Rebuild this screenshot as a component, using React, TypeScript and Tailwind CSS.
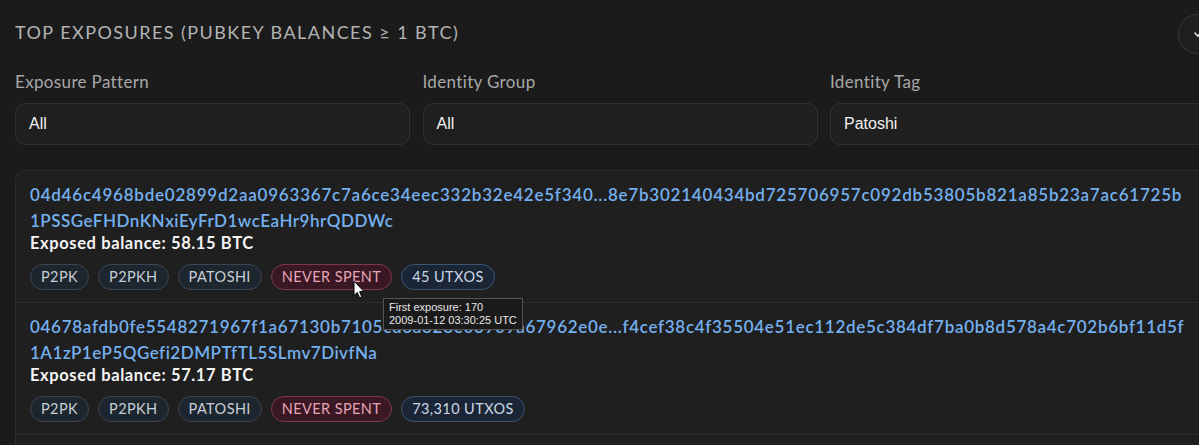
import React from "react";

type Row = {
  hash: string;
  addr: string;
  balance: string;
  utxos: string;
  track: string;
};

const rows: Row[] = [
  {
    hash: "04d46c4968bde02899d2aa0963367c7a6ce34eec332b32e42e5f340...8e7b302140434bd725706957c092db53805b821a85b23a7ac61725b",
    addr: "1PSSGeFHDnKNxiEyFrD1wcEaHr9hrQDDWc",
    balance: "58.15 BTC",
    utxos: "45 UTXOS",
    track: "tracking-[0.77px]",
  },
  {
    hash: "04678afdb0fe5548271967f1a67130b7105cd6a828e03909a67962e0e...f4cef38c4f35504e51ec112de5c384df7ba0b8d578a4c702b6bf11d5f",
    addr: "1A1zP1eP5QGefi2DMPTfTL5SLmv7DivfNa",
    balance: "57.17 BTC",
    utxos: "73,310 UTXOS",
    track: "tracking-[0.7px]",
  },
];

function Badge({ children, tone }: { children: React.ReactNode; tone: "gray" | "red" | "blue" }) {
  const cls =
    tone === "red"
      ? "bg-[#3a1823] border-[#7d3850] text-[#e7a3b8]"
      : tone === "blue"
      ? "bg-[#1a2636] border-[#3b5472] text-[#cbd6e4]"
      : "bg-[#1d252e] border-[#3a4653] text-[#c7ced6]";
  return (
    <span
      className={`inline-flex items-center h-[26px] px-[10px] rounded-full border text-[14.5px] leading-none tracking-[0.4px] ${cls}`}
    >
      {children}
    </span>
  );
}

function Cursor() {
  return (
    <svg width="13" height="20" viewBox="0 0 13 20" className="absolute left-[353px] top-[280px]">
      <path
        d="M1 1 L1 15.5 L4.3 12.4 L6.6 17.8 L8.8 16.9 L6.6 11.6 L11 11.6 Z"
        fill="#ffffff"
        stroke="#000000"
        strokeWidth="1"
        strokeLinejoin="round"
      />
    </svg>
  );
}

export default function App() {
  return (
    <div className="relative w-[1199px] h-[445px] overflow-hidden bg-[#1b1b1b] font-['Lato',sans-serif]">
      <div className="w-[1260px] pl-[15px] pt-[20px]">
        <div className="flex items-center h-[24px] relative">
          <h2 className="text-[18px] leading-[24px] text-[#b4b4b4] tracking-[1.45px] font-normal">
            TOP EXPOSURES (PUBKEY BALANCES ≥ 1 BTC)
          </h2>
          <div className="absolute left-[1163px] top-[-6px] w-[40px] h-[40px] rounded-full border border-[#3a3a3a] bg-[#1e1e1e] flex items-center justify-center">
            <svg width="12" height="12" viewBox="0 0 12 12">
              <path d="M3 5 L6 8 L9 5" fill="none" stroke="#e5e5e5" strokeWidth="1.6" strokeLinecap="round" />
            </svg>
          </div>
        </div>

        <div className="mt-[26px] flex gap-[12.5px]">
          {[
            ["Exposure Pattern", "All"],
            ["Identity Group", "All"],
            ["Identity Tag", "Patoshi"],
          ].map(([label, value]) => (
            <div key={label} className="w-[395px] flex flex-col">
              <div className="text-[17px] leading-[24px] text-[#a8a8a8] tracking-[0.35px]">{label}</div>
              <div className="mt-[9px] h-[42px] rounded-[10px] border border-[#303030] bg-[#1f1f1f] flex items-center px-[13px] font-['Liberation_Sans',Arial,sans-serif] text-[16px] text-[#f2f2f2]">
                {value}
              </div>
            </div>
          ))}
        </div>

        <div className="mt-[25px] rounded-tl-[10px] border-l border-t border-[#2c2c2c] bg-[#1f1f1f]">
          {rows.map((r, i) => (
            <div
              key={i}
              className={`pl-[14px] pt-[11px] pb-[12px] ${i > 0 ? "border-t border-[#2c2c2c]" : ""}`}
            >
              <div className={`text-[17px] leading-[26px] font-semibold text-[#74b0ee] whitespace-nowrap ${r.track}`}>
                {r.hash}
              </div>
              <div className="text-[17px] leading-[25px] font-semibold text-[#74b0ee] whitespace-nowrap tracking-[0.5px]">
                {r.addr}
              </div>
              <div className="text-[16.5px] leading-[20px] font-bold text-[#f4f4f4] tracking-[0.6px]">
                Exposed balance: {r.balance}
              </div>
              <div className="mt-[11px] flex gap-[9px]">
                <Badge tone="gray">P2PK</Badge>
                <Badge tone="gray">P2PKH</Badge>
                <Badge tone="gray">PATOSHI</Badge>
                <Badge tone="red">NEVER SPENT</Badge>
                <Badge tone="blue">{r.utxos}</Badge>
              </div>
            </div>
          ))}
          <div className="h-[20px] border-t border-[#2c2c2c]" />
        </div>
      </div>

      <div className="absolute left-[383px] top-[298px] w-[140px] px-[5px] py-[2px] bg-[#1a1a1a] border border-[#555555] font-['Liberation_Sans',Arial,sans-serif] text-[11px] leading-[13px] text-[#e8e8e8]">
        <div>First exposure: 170</div>
        <div>2009-01-12 03:30:25 UTC</div>
      </div>
      <Cursor />
    </div>
  );
}
